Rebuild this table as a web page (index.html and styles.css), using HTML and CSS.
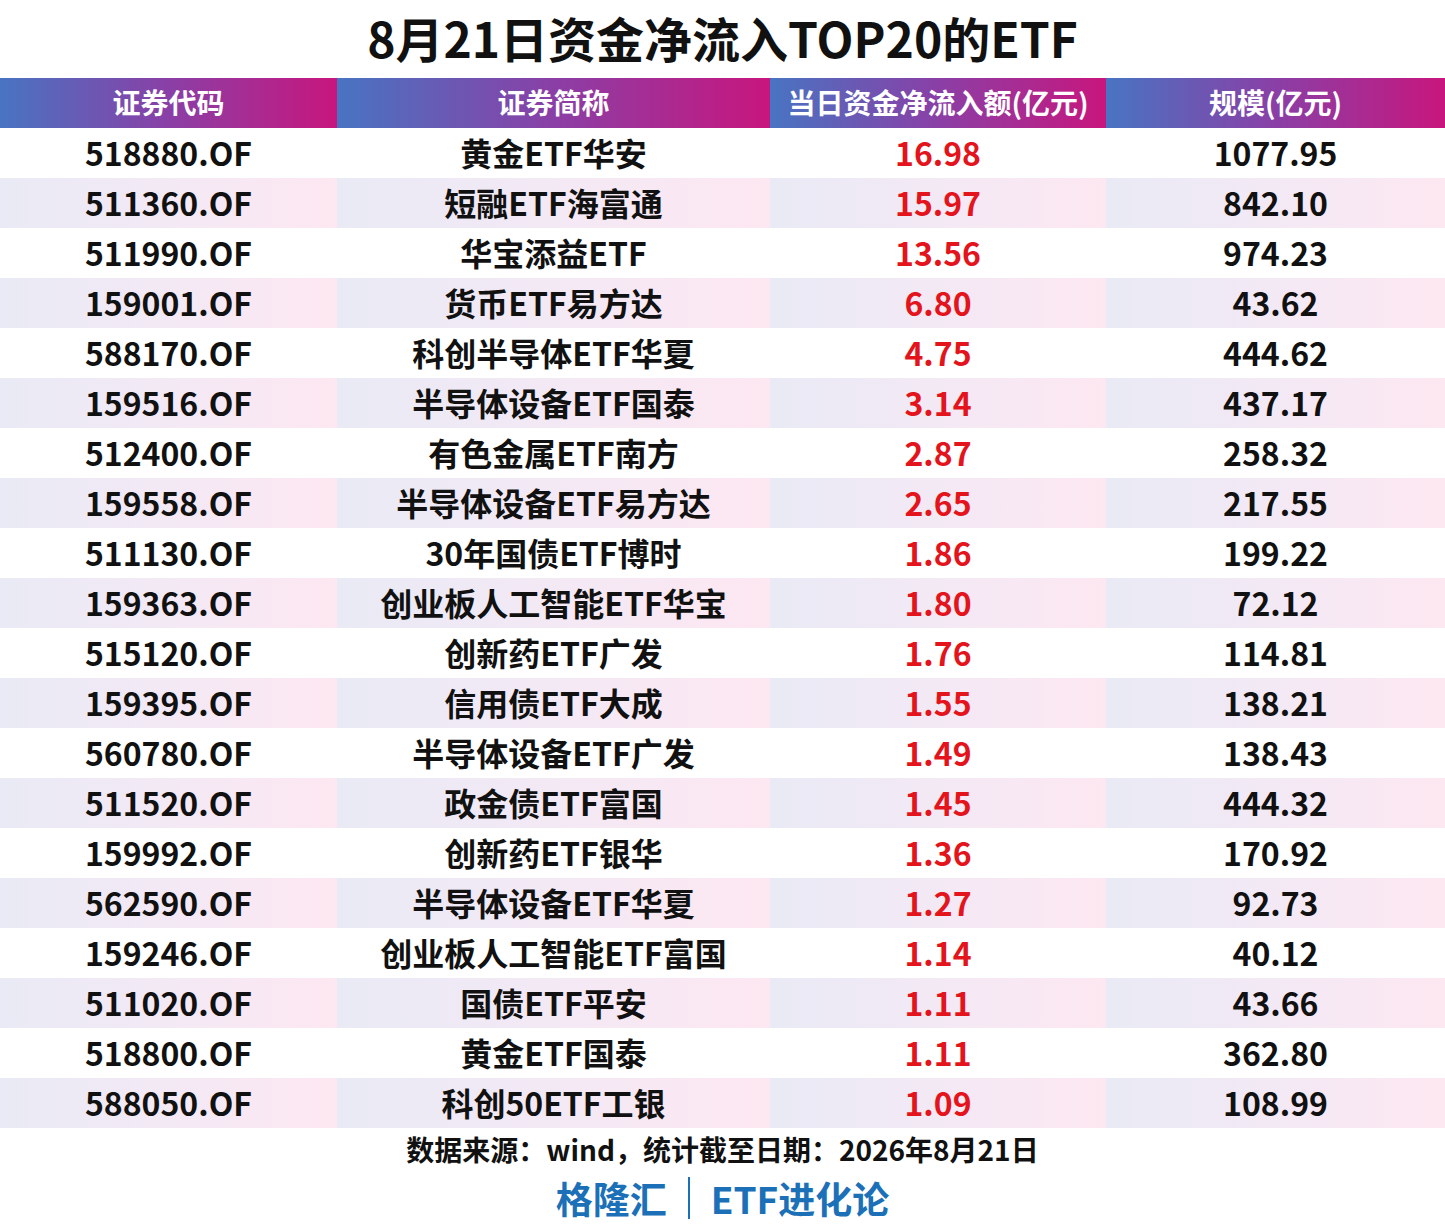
FILE: index.html
```html
<!DOCTYPE html>
<html lang="zh">
<head>
<meta charset="utf-8">
<link rel="stylesheet" href="styles.css">
</head>
<body>
<div class="page">
  <h1 class="title">8月21日资金净流入TOP20的ETF</h1>
  <div class="table">
    <div class="row head">
      <div class="cell">证券代码</div>
      <div class="cell">证券简称</div>
      <div class="cell">当日资金净流入额(亿元)</div>
      <div class="cell">规模(亿元)</div>
    </div>
    <div class="row"><div class="cell">518880.OF</div><div class="cell">黄金ETF华安</div><div class="cell red">16.98</div><div class="cell">1077.95</div></div>
    <div class="row alt"><div class="cell">511360.OF</div><div class="cell">短融ETF海富通</div><div class="cell red">15.97</div><div class="cell">842.10</div></div>
    <div class="row"><div class="cell">511990.OF</div><div class="cell">华宝添益ETF</div><div class="cell red">13.56</div><div class="cell">974.23</div></div>
    <div class="row alt"><div class="cell">159001.OF</div><div class="cell">货币ETF易方达</div><div class="cell red">6.80</div><div class="cell">43.62</div></div>
    <div class="row"><div class="cell">588170.OF</div><div class="cell">科创半导体ETF华夏</div><div class="cell red">4.75</div><div class="cell">444.62</div></div>
    <div class="row alt"><div class="cell">159516.OF</div><div class="cell">半导体设备ETF国泰</div><div class="cell red">3.14</div><div class="cell">437.17</div></div>
    <div class="row"><div class="cell">512400.OF</div><div class="cell">有色金属ETF南方</div><div class="cell red">2.87</div><div class="cell">258.32</div></div>
    <div class="row alt"><div class="cell">159558.OF</div><div class="cell">半导体设备ETF易方达</div><div class="cell red">2.65</div><div class="cell">217.55</div></div>
    <div class="row"><div class="cell">511130.OF</div><div class="cell">30年国债ETF博时</div><div class="cell red">1.86</div><div class="cell">199.22</div></div>
    <div class="row alt"><div class="cell">159363.OF</div><div class="cell">创业板人工智能ETF华宝</div><div class="cell red">1.80</div><div class="cell">72.12</div></div>
    <div class="row"><div class="cell">515120.OF</div><div class="cell">创新药ETF广发</div><div class="cell red">1.76</div><div class="cell">114.81</div></div>
    <div class="row alt"><div class="cell">159395.OF</div><div class="cell">信用债ETF大成</div><div class="cell red">1.55</div><div class="cell">138.21</div></div>
    <div class="row"><div class="cell">560780.OF</div><div class="cell">半导体设备ETF广发</div><div class="cell red">1.49</div><div class="cell">138.43</div></div>
    <div class="row alt"><div class="cell">511520.OF</div><div class="cell">政金债ETF富国</div><div class="cell red">1.45</div><div class="cell">444.32</div></div>
    <div class="row"><div class="cell">159992.OF</div><div class="cell">创新药ETF银华</div><div class="cell red">1.36</div><div class="cell">170.92</div></div>
    <div class="row alt"><div class="cell">562590.OF</div><div class="cell">半导体设备ETF华夏</div><div class="cell red">1.27</div><div class="cell">92.73</div></div>
    <div class="row"><div class="cell">159246.OF</div><div class="cell">创业板人工智能ETF富国</div><div class="cell red">1.14</div><div class="cell">40.12</div></div>
    <div class="row alt"><div class="cell">511020.OF</div><div class="cell">国债ETF平安</div><div class="cell red">1.11</div><div class="cell">43.66</div></div>
    <div class="row"><div class="cell">518800.OF</div><div class="cell">黄金ETF国泰</div><div class="cell red">1.11</div><div class="cell">362.80</div></div>
    <div class="row alt"><div class="cell">588050.OF</div><div class="cell">科创50ETF工银</div><div class="cell red">1.09</div><div class="cell">108.99</div></div>
  </div>
  <p class="source">数据来源：wind，统计截至日期：2026年8月21日</p>
  <p class="brand"><span>格隆汇</span><span class="bar"></span><span>ETF进化论</span></p>
</div>
</body>
</html>
```

FILE: styles.css
```css
* { box-sizing: border-box; }
html, body { margin: 0; padding: 0; background: #ffffff; }
body {
  font-family: "Noto Sans CJK SC", "Noto Sans", sans-serif;
  font-weight: 700;
  color: #111111;
}
.page { width: 1445px; }
.title {
  margin: 0;
  height: 78px;
  padding-bottom: 4px;
  font-size: 48px;
  line-height: 74px;
  text-align: center;
  font-weight: 700;
  color: #111;
}
.table { display: flex; flex-direction: column; }
.row {
  display: grid;
  grid-template-columns: 337px 433px 336px 339px;
  height: 50px;
}
.cell {
  display: flex;
  align-items: center;
  justify-content: center;
  padding-bottom: 3px;
  font-size: 32px;
  line-height: 1;
  white-space: nowrap;
}
.head .cell {
  color: #ffffff;
  font-size: 28px;
  background: linear-gradient(90deg, #4874c2 0%, #8a3fa6 50%, #c8167d 100%);
}
.alt .cell {
  background: linear-gradient(90deg, #e9eaf5 0%, #f3e9f5 50%, #fde7f1 100%);
}
.red { color: #e3141c; }
.source {
  margin: 0;
  height: 44px;
  line-height: 42px;
  text-align: center;
  font-size: 28px;
  color: #111;
}
.brand {
  margin: 0;
  height: 58px;
  padding-bottom: 6px;
  display: flex;
  align-items: center;
  justify-content: center;
  gap: 21px;
  font-size: 37px;
  color: #1b70b7;
}
.bar {
  display: inline-block;
  width: 2px;
  height: 42px;
  background: #1b70b7;
}
```
